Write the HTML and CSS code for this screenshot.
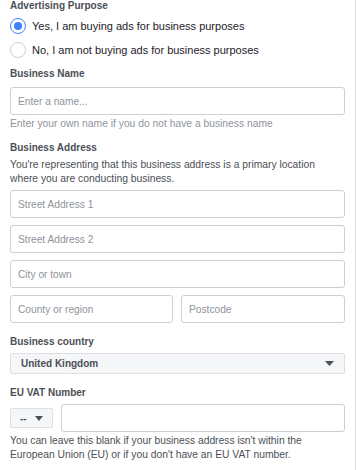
FILE: index.html
```html
<!DOCTYPE html>
<html>
<head lang="en">
    <meta charset="UTF-8">
    <title>Business details</title>
    <link rel="stylesheet" href="styles.css">
</head>
<body>
    <div class="panel">
        <div class="label">Advertising Purpose</div>
        <div class="radiogroup">
            <div class="radio">
                <span class="dot checked"></span>
                <span>Yes, I am buying ads for business purposes</span>
            </div>
            <div class="radio">
                <span class="dot"></span>
                <span>No, I am not buying ads for business purposes</span>
            </div>
        </div>

        <div class="label field-name">Business Name</div>
        <input class="textbox" type="text" placeholder="Enter a name...">
        <div class="hint">Enter your own name if you do not have a business name</div>

        <div class="label field-address">Business Address</div>
        <div class="note">You're representing that this business address is a primary location where you are conducting business.</div>
        <div class="address">
            <input class="textbox" type="text" placeholder="Street Address 1">
            <input class="textbox" type="text" placeholder="Street Address 2">
            <input class="textbox" type="text" placeholder="City or town">
            <div class="pair">
                <input class="textbox" type="text" placeholder="County or region">
                <input class="textbox" type="text" placeholder="Postcode">
            </div>
        </div>

        <div class="label field-country">Business country</div>
        <div class="select">
            <span>United Kingdom</span>
            <svg class="caret" width="9" height="5" viewBox="0 0 9 5"><path d="M0 0h9L4.5 5z" fill="#4b4f56"/></svg>
        </div>

        <div class="label field-vat">EU VAT Number</div>
        <div class="vatrow">
            <div class="select small">
                <span>--</span>
                <svg class="caret" width="8" height="5" viewBox="0 0 8 5"><path d="M0 0h8L4 5z" fill="#4b4f56"/></svg>
            </div>
            <input class="textbox" type="text">
        </div>
        <div class="note vatnote">You can leave this blank if your business address isn't within the European Union (EU) or if you don't have an EU VAT number.</div>
    </div>
</body>
</html>
```

FILE: styles.css
```css
body {
    margin: 0;
    background-color: #fff;
    font-family: "Liberation Sans", Arial, sans-serif;
}
.panel {
    width: 335px;
    min-height: 470px;
    padding: 0 10px;
    border-right: 1px solid #dddfe2;
    box-sizing: content-box;
}
.label {
    font-size: 10px;
    line-height: 12px;
    font-weight: bold;
    color: #4b4f56;
}
.radiogroup {
    margin-top: 2px;
}
.radio {
    display: flex;
    align-items: center;
    height: 24px;
    font-size: 11px;
    color: #1d2129;
}
.dot {
    width: 16px;
    height: 16px;
    box-sizing: border-box;
    border: 1px solid #ccd0d5;
    border-radius: 50%;
    margin-right: 6px;
    display: flex;
    align-items: center;
    justify-content: center;
}
.dot.checked {
    border-color: #4080ff;
}
.dot.checked::after {
    content: "";
    width: 8px;
    height: 8px;
    border-radius: 50%;
    background-color: #4080ff;
}
.field-name {
    margin-top: 6px;
    margin-bottom: 7px;
}
.field-address {
    margin-top: 11px;
}
.field-country {
    margin-top: 13px;
    margin-bottom: 5px;
}
.field-vat {
    margin-top: 13px;
    margin-bottom: 5px;
}
.textbox {
    display: block;
    width: 100%;
    height: 28px;
    box-sizing: border-box;
    margin: 0;
    padding: 0 7px;
    border: 1px solid #ccd0d5;
    border-radius: 3px;
    background-color: #fff;
    font-family: "Liberation Sans", Arial, sans-serif;
    font-size: 10.2px;
    color: #1d2129;
    outline: none;
}
.textbox::placeholder {
    color: #90949c;
}
.hint {
    margin-top: 2px;
    font-size: 10.3px;
    line-height: 14px;
    color: #90949c;
}
.note {
    margin-top: 4px;
    font-size: 10.3px;
    line-height: 14px;
    color: #4b4f56;
}
.address {
    display: flex;
    flex-direction: column;
    gap: 7px;
    margin-top: 4px;
}
.pair {
    display: flex;
    gap: 8px;
}
.pair .textbox:first-child {
    width: 163px;
    flex: none;
}
.pair .textbox:last-child {
    flex: 1;
}
.select {
    display: flex;
    align-items: center;
    justify-content: space-between;
    height: 21px;
    box-sizing: border-box;
    padding: 0 10px;
    border: 1px solid #dddfe2;
    border-radius: 2px;
    background-color: #f5f6f7;
    font-size: 10px;
    font-weight: bold;
    color: #4b4f56;
    white-space: nowrap;
}
.vatrow {
    display: flex;
    align-items: center;
    gap: 8px;
}
.select.small {
    width: 43px;
    height: 20px;
    flex: none;
    padding: 0 0 0 9px;
    justify-content: flex-start;
    gap: 8px;
}
.vatrow .textbox {
    flex: 1;
}
.vatnote {
    margin-top: 2px;
}
```
